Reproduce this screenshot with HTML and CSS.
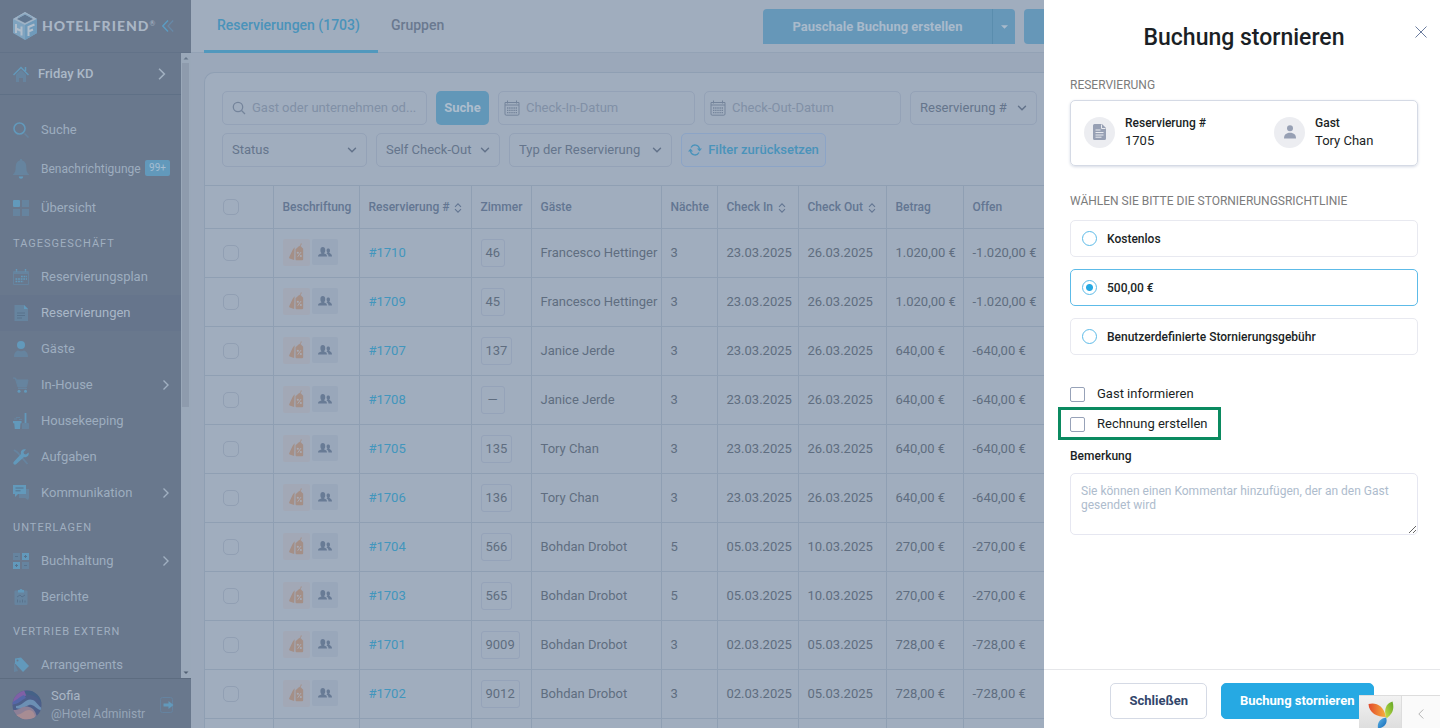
FILE: index.html
```html
<!DOCTYPE html>
<html lang="de">
<head>
<meta charset="utf-8">
<meta name="viewport" content="width=device-width, initial-scale=1">
<title>Reservierungen</title>
<link rel="stylesheet" href="styles.css">
</head>
<body>
<svg class="sprite" aria-hidden="true">
  <symbol id="i-chev-down" viewBox="0 0 10 10"><path d="M1.500 3.200 5 6.800l3.500-3.600" fill="none" stroke="currentColor" stroke-width="1.400" stroke-linecap="round"/></symbol>
  <symbol id="i-chev-right" viewBox="0 0 8 12"><path d="M1.500 1.500 6 6l-4.500 4.500" fill="none" stroke="currentColor" stroke-width="1.400"/></symbol>
  <symbol id="i-sort" viewBox="0 0 8 10"><path d="M1 3.800 4 .8l3 3M1 6.200l3 3 3-3" fill="none" stroke="currentColor" stroke-width="1.100"/></symbol>
  <symbol id="i-cal" viewBox="0 0 16 16"><path d="M1 2.500h14v11.500a1.200 1.200 0 0 1-1.200 1.200H2.200A1.200 1.200 0 0 1 1 14zM1 5h14M3.500.5v3M12.500.5v3" fill="none" stroke="currentColor"/><path d="M3 8h10M3 10.300h10M3 12.600h10" stroke="currentColor" stroke-width="1.300" stroke-dasharray="1.400 .75"/></symbol>
  <symbol id="i-tags" viewBox="0 0 16 20"><path d="M6 4.500 4 7 .3 15c-.2.600 0 1 .5 1.200L5.500 18zM7 6.500l3.500-3h2L15 6v11a1.200 1.200 0 0 1-1.200 1.200H8A1.200 1.200 0 0 1 7 17z" fill="currentColor"/><path d="M11.500 5c-1-2 1.500-2 1.500-4.500" fill="none" stroke="currentColor"/><path d="m9.200 14.500 3.600-5" stroke="#a9acb6"/><circle cx="9.400" cy="10.300" r="1.100" fill="#a9acb6"/><circle cx="12.600" cy="13.700" r="1.100" fill="#a9acb6"/></symbol>
  <symbol id="i-people" viewBox="0 0 14 10"><path d="M0 9.500C0 7 3 6.800 3.500 6.200 2.700 5.500 2.400 4.500 2.400 3 2.400 1 3.300 0 4.800 0s2.400 1 2.400 3c0 1.500-.3 2.500-1.100 3.200C6.600 6.800 9 7 9 9.500zM10.500 9.500c0-1.500-.8-2.400-2-2.900.6-.4.900-.8.800-1.300-.5-.6-.7-1.200-.7-1.900C8.600 2 9.300 1.500 10.300 1.500S12 2 12 3.500c0 1-.2 1.500-.8 2 .3 1 2.800.9 2.800 4z" fill="currentColor"/></symbol>
</svg>

<div class="app">
  <aside class="sidebar">
    <div class="brand">
      <svg class="brand-mark" viewBox="0 0 26 30"><path d="M1 8 13 1l12 7v14l-12 7-12-7z" fill="#7fa3bf"/><path d="M1 8 13 1l12 7-12 6z" fill="#9fb2c5"/><path d="m5 8 8-4.500L21 8l-8 4z" fill="#607791"/><path d="m6 6.500 7-3.500 7 3.500" stroke="#7fa3bf" fill="none"/><path d="M13 14v15l12-7V8z" fill="#6f9aba"/><path d="M4 13v9M9.500 15.500v9M4 17.500l5.500 2.500M16.500 25v-9l6-2.500M16.500 20.500l4.500-2" stroke="#b0bdcb" stroke-width="2" fill="none"/></svg>
      <span class="brand-name">HOTELFRIEND<sup>®</sup></span>
      <button class="plain collapse" aria-label="Menü einklappen"><svg viewBox="0 0 12 12"><path d="M6 .5.800 6 6 11.500" fill="none" stroke="#5b9cc3" stroke-width="1.400"/><path d="M11.200.5 6 6l5.200 5.500" fill="none" stroke="#6789a8" stroke-width="1.200"/></svg></button>
    </div>
    <div class="side-body">
      <div class="side-scroll">
        <button class="hotel"><svg class="ico" viewBox="0 0 16 16"><path d="M3 8.500 8 4l5 4.500V16h-3v-4H6v4H3z" fill="#66849f"/><path d="M.5 9 8 1.500 15.500 9M12.500 1v4" fill="none" stroke="#6299bb" stroke-width="1.500"/></svg><span>Friday KD</span><svg class="go big"><use href="#i-chev-right"/></svg></button>
        <nav>
          <ul class="menu top">
            <li><a href="#"><svg class="ico" viewBox="0 0 16 16"><circle cx="6.500" cy="6.500" r="5.500" fill="none" stroke="#6299bb" stroke-width="1.600"/><path d="m11.500 11.500 4 4" stroke="#66849f" stroke-width="1.500"/></svg>Suche</a></li>
            <li><a href="#" class="compact"><svg class="ico tall" viewBox="0 0 16 20"><path d="M8 0c1 0 1.200.6 1.200 1.500C12 2 13.300 4.500 13.300 8c0 4 1 6 2.700 7.500V16H0v-.5C1.700 14 2.700 12 2.700 8c0-3.500 1.300-6 4.100-6.500C6.800.6 7 0 8 0z" fill="#66849f"/><path d="M5.800 17.500h4.400a2.200 2.200 0 0 1-4.400 0z" fill="#6299bb"/></svg>Benachrichtigunge<span class="count">99+</span></a></li>
            <li><a href="#"><svg class="ico" viewBox="0 0 16 16"><rect width="7" height="7" rx="1" fill="#6299bb"/><path d="M9 0h7v7H9zM0 9h7v7H0zM9 9h7v7H9z" fill="#66849f"/></svg>Übersicht</a></li>
          </ul>
          <h2 class="group">Tagesgeschäft</h2>
          <ul class="menu">
            <li><a href="#"><svg class="ico" viewBox="0 0 16 16"><path d="M.5 2.500h15v13H.5z" fill="none" stroke="#66849f"/><path d="M1 3h14v2H1z" fill="#66849f"/><path d="M3.500 0v3M12.500 0v3M8 7.500h6M2.500 10h11.500M2.500 12.500h8" stroke="#6299bb" stroke-width="1.400" stroke-dasharray="1.800 .8"/></svg>Reservierungsplan</a></li>
            <li class="active"><a href="#"><svg class="ico" viewBox="0 0 16 16"><path d="M1.500 0H11l4 4v12H1.500z" fill="#66849f"/><path d="M11 0v4h4z" fill="#6299bb"/><path d="M4 8h8M4 10.500h8M4 13h5" stroke="#58728c"/></svg>Reservierungen</a></li>
            <li><a href="#"><svg class="ico" viewBox="0 0 16 16"><circle cx="8" cy="4" r="4" fill="#6299bb"/><path d="M1 16c0-4 2-6 4-6.500 2 1 4 1 6 0 2 .5 4 2.500 4 6.500z" fill="#66849f"/></svg>Gäste</a></li>
            <li><a href="#"><svg class="ico" viewBox="0 0 16 16"><path d="M0 1h2.500l1 2H15l-1.500 7H5L2.500 2M5 11.500h9" fill="#66849f" stroke="#66849f"/><circle cx="6" cy="14.300" r="1.500" fill="#6299bb"/><circle cx="12.500" cy="14.300" r="1.500" fill="#6299bb"/></svg>In-House<svg class="go"><use href="#i-chev-right"/></svg></a></li>
            <li><a href="#"><svg class="ico" viewBox="0 0 16 16"><path d="M12.500 0v10" stroke="#6299bb" stroke-width="1.800"/><path d="M9.500 10.500h6V16h-6zM1 6h3M3 4.500h4M6 6.500h3" fill="#66849f" stroke="#66849f"/><path d="M0 8h8.500v2.200H7.500L7 16H1.800l-.6-5.800H0z" fill="#6299bb"/></svg>Housekeeping</a></li>
            <li><a href="#"><svg class="ico" viewBox="0 0 16 16"><path d="m1 1 3.500 2.500L14.500 15" stroke="#66849f" stroke-width="1.800" fill="none"/><path d="M15.500 3.500 13 5.500l-2-.5-.5-2L13 .5c-3-1.300-6 1-5 4.500L.6 13c-1 2 1 3.500 2.500 2.300L11 8c3.500 1 5.500-2 4.500-4.500z" fill="#6299bb"/></svg>Aufgaben</a></li>
            <li><a href="#"><svg class="ico" viewBox="0 0 16 16"><path d="M10 4h6v9l-1 2-3-2H6V9h4z" fill="#66849f"/><path d="M0 0h13v9H5l-3 3V9H0z" fill="#6299bb"/><path d="M2.500 3h8M2.500 5.800h5" stroke="#58728c"/></svg>Kommunikation<svg class="go"><use href="#i-chev-right"/></svg></a></li>
          </ul>
          <h2 class="group">Unterlagen</h2>
          <ul class="menu">
            <li><a href="#"><svg class="ico" viewBox="0 0 16 16"><path d="M0 0h7v7H0zM9 9h7v7H9z" fill="#66849f"/><path d="M9 0h7v7H9zM0 9h7v7H0z" fill="#6299bb"/><path d="M12.500 2v3M11 3.500h3M2 12.500h3M3.500 11v3M2 3.500h3M11 12.500h3" stroke="#58728c"/></svg>Buchhaltung<svg class="go"><use href="#i-chev-right"/></svg></a></li>
            <li><a href="#"><svg class="ico" viewBox="0 0 16 16"><rect x="1.500" y="1.500" width="13" height="14.500" rx="1" fill="#66849f"/><path d="M5 1h1.500C7-.3 9-.3 9.500 1H11v2.500H5z" fill="#6299bb"/><path d="m4 8 3-2 2 2 3-2M4.500 13.500v-3M7 13.500v-2M9.500 13.500v-3M12 13.500v-2" stroke="#58728c" fill="none"/></svg>Berichte</a></li>
          </ul>
          <h2 class="group">Vertrieb extern</h2>
          <ul class="menu">
            <li><a href="#"><svg class="ico" viewBox="0 0 16 16"><path d="M1 5v10l4-1z" fill="#66849f"/><path d="M2 1.500 8 .5l8 8.500-6 6L2 6.500z" fill="#6299bb"/><circle cx="4.500" cy="3.500" r="1" fill="#69788d"/></svg>Arrangements</a></li>
          </ul>
        </nav>
      </div>
      <div class="track" aria-hidden="true"><svg viewBox="0 0 8 8"><path d="M1.500 5.500 4 3l2.500 2.500z" fill="#66768a"/></svg><div class="thumb"></div><svg viewBox="0 0 8 8"><path d="M1.500 2.500 4 5l2.500-2.500z" fill="#505f73"/></svg></div>
    </div>
    <div class="user">
      <svg class="avatar" viewBox="0 0 30 30"><defs><clipPath id="av"><circle cx="15" cy="15" r="14.500"/></clipPath></defs><g clip-path="url(#av)"><path d="M0 0h30v30H0z" fill="#4d5f8a"/><path d="M0 0h20L10 9 0 15z" fill="#8060a6"/><path d="M0 14c6 1 9-4 14-6l-2-3C7 7 4 11 0 12z" fill="#5567a8"/><path d="M14 5c8-1 13 3 16 9V0H12z" fill="#456287"/><path d="M4 16c7 0 10-9 17-6 4 2 5 6 9 8v3c-6-2-8-7-13-6-5 2-8 5-13 3z" fill="#6c8fb4"/><path d="M0 20c8 1 10-5 17-3 5 1 7 6 8 10L18 30H0z" fill="#8d8097"/><path d="M3 25c7 0 9-5 14-5 4 0 6 4 6 8L12 30z" fill="#a78c93"/></g></svg>
      <div class="who"><b>Sofia</b><span>@Hotel Administr</span></div>
      <button class="plain logout" aria-label="Abmelden"><svg viewBox="0 0 14 16"><rect x=".5" y=".5" width="12" height="15" rx="2" fill="none" stroke="#6583a0"/><path d="M3.500 6.500h5V4L13.500 8l-5 4V9.500h-5z" fill="#6299bb"/></svg></button>
    </div>
  </aside>

  <main class="main">
    <header class="topbar">
      <nav class="tabs"><a class="tab on" href="#">Reservierungen (1703)</a><a class="tab" href="#">Gruppen</a></nav>
      <div class="actions">
        <div class="split"><button>Pauschale Buchung erstellen</button><button class="more" aria-label="Mehr"><svg viewBox="0 0 8 4"><path d="M0 0h8L4 4z" fill="currentColor"/></svg></button></div>
        <button class="create" aria-label="Erstellen"></button>
      </div>
    </header>
    <section class="card">
      <form class="filters">
        <div class="line">
          <label class="field w-search"><svg class="lens" viewBox="0 0 14 14"><circle cx="6" cy="6" r="4.700" fill="none" stroke="currentColor" stroke-width="1.300"/><path d="m9.500 9.500 3.500 3.500" stroke="currentColor" stroke-width="1.300"/></svg><input type="text" placeholder="Gast oder unternehmen od..." aria-label="Gast oder Unternehmen"></label>
          <button class="search" type="button">Suche</button>
          <label class="field date"><svg class="cal"><use href="#i-cal"/></svg><input type="text" placeholder="Check-In-Datum" aria-label="Check-In-Datum"></label>
          <label class="field date"><svg class="cal"><use href="#i-cal"/></svg><input type="text" placeholder="Check-Out-Datum" aria-label="Check-Out-Datum"></label>
          <label class="field w-res"><select aria-label="Sortierfeld"><option>Reservierung #</option></select><svg class="chev"><use href="#i-chev-down"/></svg></label>
        </div>
        <div class="line">
          <label class="field w-status"><select aria-label="Status"><option>Status</option></select><svg class="chev"><use href="#i-chev-down"/></svg></label>
          <label class="field w-self"><select aria-label="Self Check-Out"><option>Self Check-Out</option></select><svg class="chev"><use href="#i-chev-down"/></svg></label>
          <label class="field w-type"><select aria-label="Typ der Reservierung"><option>Typ der Reservierung</option></select><svg class="chev"><use href="#i-chev-down"/></svg></label>
          <button class="reset" type="button"><svg viewBox="0 0 14 12"><path d="M2.500 7A4.500 4.500 0 0 0 11 8.500M11.500 5A4.500 4.500 0 0 0 3 3.500" fill="none" stroke="currentColor" stroke-width="1.300"/><path d="M0 7.500 2.500 4.500 5 7.500zM9 4.500h5L11.500 7.500z" fill="currentColor"/></svg>Filter zurücksetzen</button>
        </div>
      </form>
      <table class="grid">
        <colgroup><col class="c-check"><col class="c-label"><col class="c-res"><col class="c-room"><col class="c-guest"><col class="c-nights"><col class="c-in"><col class="c-out"><col class="c-sum"><col></colgroup>
        <thead><tr><th><input type="checkbox" aria-label="Alle auswählen"></th><th>Beschriftung</th><th>Reservierung # <svg class="sort"><use href="#i-sort"/></svg></th><th>Zimmer</th><th>Gäste</th><th>Nächte</th><th>Check In <svg class="sort"><use href="#i-sort"/></svg></th><th>Check Out <svg class="sort"><use href="#i-sort"/></svg></th><th>Betrag</th><th>Offen</th></tr></thead>
        <tbody>
          <tr><td><input type="checkbox" aria-label="1710"></td><td><span class="tags"><svg class="offer"><use href="#i-tags"/></svg><svg class="people"><use href="#i-people"/></svg></span></td><td><a href="#">#1710</a></td><td><span class="room">46</span></td><td>Francesco Hettinger</td><td>3</td><td>23.03.2025</td><td>26.03.2025</td><td>1.020,00 €</td><td>-1.020,00 €</td></tr>
          <tr><td><input type="checkbox" aria-label="1709"></td><td><span class="tags"><svg class="offer"><use href="#i-tags"/></svg><svg class="people"><use href="#i-people"/></svg></span></td><td><a href="#">#1709</a></td><td><span class="room">45</span></td><td>Francesco Hettinger</td><td>3</td><td>23.03.2025</td><td>26.03.2025</td><td>1.020,00 €</td><td>-1.020,00 €</td></tr>
          <tr><td><input type="checkbox" aria-label="1707"></td><td><span class="tags"><svg class="offer"><use href="#i-tags"/></svg><svg class="people"><use href="#i-people"/></svg></span></td><td><a href="#">#1707</a></td><td><span class="room">137</span></td><td>Janice Jerde</td><td>3</td><td>23.03.2025</td><td>26.03.2025</td><td>640,00 €</td><td>-640,00 €</td></tr>
          <tr><td><input type="checkbox" aria-label="1708"></td><td><span class="tags"><svg class="offer"><use href="#i-tags"/></svg><svg class="people"><use href="#i-people"/></svg></span></td><td><a href="#">#1708</a></td><td><span class="room">—</span></td><td>Janice Jerde</td><td>3</td><td>23.03.2025</td><td>26.03.2025</td><td>640,00 €</td><td>-640,00 €</td></tr>
          <tr><td><input type="checkbox" aria-label="1705"></td><td><span class="tags"><svg class="offer"><use href="#i-tags"/></svg><svg class="people"><use href="#i-people"/></svg></span></td><td><a href="#">#1705</a></td><td><span class="room">135</span></td><td>Tory Chan</td><td>3</td><td>23.03.2025</td><td>26.03.2025</td><td>640,00 €</td><td>-640,00 €</td></tr>
          <tr><td><input type="checkbox" aria-label="1706"></td><td><span class="tags"><svg class="offer"><use href="#i-tags"/></svg><svg class="people"><use href="#i-people"/></svg></span></td><td><a href="#">#1706</a></td><td><span class="room">136</span></td><td>Tory Chan</td><td>3</td><td>23.03.2025</td><td>26.03.2025</td><td>640,00 €</td><td>-640,00 €</td></tr>
          <tr><td><input type="checkbox" aria-label="1704"></td><td><span class="tags"><svg class="offer"><use href="#i-tags"/></svg><svg class="people"><use href="#i-people"/></svg></span></td><td><a href="#">#1704</a></td><td><span class="room">566</span></td><td>Bohdan Drobot</td><td>5</td><td>05.03.2025</td><td>10.03.2025</td><td>270,00 €</td><td>-270,00 €</td></tr>
          <tr><td><input type="checkbox" aria-label="1703"></td><td><span class="tags"><svg class="offer"><use href="#i-tags"/></svg><svg class="people"><use href="#i-people"/></svg></span></td><td><a href="#">#1703</a></td><td><span class="room">565</span></td><td>Bohdan Drobot</td><td>5</td><td>05.03.2025</td><td>10.03.2025</td><td>270,00 €</td><td>-270,00 €</td></tr>
          <tr><td><input type="checkbox" aria-label="1701"></td><td><span class="tags"><svg class="offer"><use href="#i-tags"/></svg><svg class="people"><use href="#i-people"/></svg></span></td><td><a href="#">#1701</a></td><td><span class="room">9009</span></td><td>Bohdan Drobot</td><td>3</td><td>02.03.2025</td><td>05.03.2025</td><td>728,00 €</td><td>-728,00 €</td></tr>
          <tr><td><input type="checkbox" aria-label="1702"></td><td><span class="tags"><svg class="offer"><use href="#i-tags"/></svg><svg class="people"><use href="#i-people"/></svg></span></td><td><a href="#">#1702</a></td><td><span class="room">9012</span></td><td>Bohdan Drobot</td><td>3</td><td>02.03.2025</td><td>05.03.2025</td><td>728,00 €</td><td>-728,00 €</td></tr>
          <tr><td></td><td></td><td></td><td></td><td></td><td></td><td></td><td></td><td></td><td></td></tr>
        </tbody>
      </table>
    </section>
  </main>
</div>

<aside class="drawer" role="dialog" aria-labelledby="title">
  <button class="plain close" aria-label="Dialog schließen"><svg viewBox="0 0 12 12"><path d="m.5.5 11 11M11.500.5l-11 11" stroke="#6b7c9e" stroke-width="1"/></svg></button>
  <div class="drawer-body">
    <h1 id="title">Buchung stornieren</h1>
    <h2 class="caption">RESERVIERUNG</h2>
    <div class="summary">
      <div class="info"><span class="disc"><svg width="13" height="16" viewBox="0 0 13 16"><path d="M1.500 0H9l4 4v10.500a1.500 1.500 0 0 1-1.500 1.500h-10A1.500 1.500 0 0 1 0 14.500v-13A1.500 1.500 0 0 1 1.500 0z" fill="#97a0b4"/><path d="M8.500.5v4h4" fill="none" stroke="#e8eaef"/><path d="M2.500 6h5M2.500 8.500h8M2.500 11h8M2.500 13.200h6" stroke="#e8eaef"/></svg></span><div><b>Reservierung #</b><span>1705</span></div></div>
      <div class="info"><span class="disc"><svg width="14" height="14" viewBox="0 0 14 14"><circle cx="7" cy="3.300" r="3" fill="#97a0b4"/><path d="M1 13.500C1 10 3 7.800 7 7.800s6 2.200 6 5.700z" fill="#97a0b4"/></svg></span><div><b>Gast</b><span>Tory Chan</span></div></div>
    </div>
    <h2 class="caption second">WÄHLEN SIE BITTE DIE STORNIERUNGSRICHTLINIE</h2>
    <div class="options">
      <label class="option"><input type="radio" name="fee">Kostenlos</label>
      <label class="option"><input type="radio" name="fee" checked>500,00 €</label>
      <label class="option"><input type="radio" name="fee">Benutzerdefinierte Stornierungsgebühr</label>
    </div>
    <div class="checks">
      <label><input type="checkbox">Gast informieren</label>
      <label class="marked"><input type="checkbox">Rechnung erstellen</label>
    </div>
    <label class="note-label" for="note">Bemerkung</label>
    <textarea id="note" placeholder="Sie können einen Kommentar hinzufügen, der an den Gast gesendet wird"></textarea>
  </div>
  <footer class="drawer-foot"><button class="btn">Schließen</button><button class="btn primary">Buchung stornieren</button></footer>
</aside>

<div class="debug">
  <a href="#" class="debug-logo" aria-label="Debugger"><svg viewBox="0 0 26 28"><defs><linearGradient id="yr" x2="1"><stop stop-color="#e2492c"/><stop offset="1" stop-color="#f7b13c"/></linearGradient><linearGradient id="yg" x1="1" x2="0" y2="1"><stop stop-color="#5fa525"/><stop offset="1" stop-color="#cbe04a"/></linearGradient><linearGradient id="yb" y2="1"><stop stop-color="#5db5e8"/><stop offset="1" stop-color="#1166b4"/></linearGradient></defs><path d="M.5 3c7-2 15 1 17.500 13C9 16 1 12 .5 3z" fill="url(#yr)"/><path d="M24.500.5c2 7 .5 12-6 17-3-8-1-15 6-17z" fill="url(#yg)"/><path d="M18 16.500c2 5-1 10-8 11-1-6 2-10 8-11z" fill="url(#yb)"/></svg></a>
  <button class="debug-toggle" aria-label="Ausklappen"><svg viewBox="0 0 6 10"><path d="M5.300.5.800 5l4.500 4.500" fill="none" stroke="#b5b5b5" stroke-width="1"/></svg></button>
</div>
</body>
</html>
```

FILE: styles.css
```css
* { box-sizing: border-box; }
body { margin: 0; height: 100vh; overflow: hidden; font: 13px/18px Roboto, "Liberation Sans", sans-serif; color: #5f6d80; }
button, input, select, textarea { font: inherit; color: inherit; }
button { cursor: pointer; }
a { color: inherit; text-decoration: none; }
ul { list-style: none; margin: 0; padding: 0; }
h1, h2 { margin: 0; }
.sprite { display: none; }
.plain { border: 0; padding: 0; background: none; display: flex; }

.app { display: flex; height: 100%; background: #9ba8ba; }

/* Sidebar */
.sidebar { width: 191px; flex: none; display: flex; flex-direction: column; background: #69788d; color: #9dadbf; }
.brand { height: 53px; flex: none; display: flex; align-items: center; padding: 0 17px 0 12px; border-bottom: 1px solid #627288; }
.brand-mark { width: 26px; height: 30px; flex: none; }
.brand-name { font: 900 14px/20px Lato, sans-serif; letter-spacing: 1px; color: #a9b6c5; margin-left: 4px; }
.brand-name sup { font-size: 7px; line-height: 0; vertical-align: 5px; letter-spacing: 0; font-weight: 400; }
.collapse { margin-left: auto; }
.collapse svg { width: 12px; height: 12px; }
.side-body { flex: 1; min-height: 0; display: flex; }
.side-scroll { flex: 1; min-width: 0; overflow: hidden; }
.hotel { width: 100%; height: 42px; display: flex; align-items: center; gap: 9px; padding: 0 14px 0 13px; background: none; border: 0; border-bottom: 1px solid #5f7086; font-weight: 500; color: #abb8c7; }
.ico { width: 16px; height: 16px; flex: none; }
.ico.tall { height: 20px; }
.go { width: 8px; height: 12px; margin-left: auto; color: #a1b0c1; }
.go.big { height: 14px; width: 10px; }
.menu a { position: relative; height: 36px; display: flex; align-items: center; gap: 12px; padding: 0 11px 0 13px; }
.menu.top { padding-top: 15px; }
.menu.top a { height: 39px; }
.menu.top .compact { font-size: 12px; }
.menu .active { background: #66758c; color: #a9b7c7; }
.count { position: absolute; right: 11px; top: 11px; height: 16px; padding: 0 4px; font-size: 10px; line-height: 16px; color: #a5bdd1; background: #6299bb; border-radius: 2px; }
.group { height: 32px; padding: 9px 13px 0; font-size: 11px; line-height: 16px; font-weight: 400; letter-spacing: 1px; text-transform: uppercase; color: #a0afc0; }
.track { width: 10px; flex: none; display: flex; flex-direction: column; align-items: center; background: #9aa8b9; padding-right: 1px; }
.track svg { width: 8px; height: 10px; flex: none; }
.track svg:last-child { margin-top: auto; }
.thumb { width: 7px; height: 55%; background: #8e9bad; }
.user { height: 50px; flex: none; display: flex; align-items: center; padding: 2px 17px 0 12px; border-top: 1px solid #5d6c80; }
.avatar { width: 30px; height: 30px; }
.who { margin-left: 9px; display: flex; flex-direction: column; font-size: 12px; color: #97a6b8; }
.who b { font-size: 13px; font-weight: 400; color: #a9b6c5; }
.logout { margin-left: auto; }
.logout svg { width: 14px; height: 16px; }

/* Main area */
.main { flex: 1; min-width: 0; overflow: hidden; }
.topbar { height: 53px; display: flex; justify-content: space-between; padding-left: 13px; background: #a0adbe; border-bottom: 1px solid #93a2b5; }
.tabs { display: flex; }
.tab { height: 53px; padding: 0 13px; font-size: 14px; font-weight: 500; line-height: 50px; color: #6a7990; border-bottom: 3px solid transparent; }
.tab.on { padding-right: 18px; color: #4a93ba; border-color: #5198bd; }
.actions { display: flex; gap: 9px; padding: 9px 20px 0 0; }
.actions button { height: 35px; border: 0; background: #6697b8; color: #a9bacb; font-weight: 700; }
.split { display: flex; border-radius: 4px; overflow: hidden; }
.split button { width: 229px; }
.split .more { width: 23px; padding: 0; border-left: 1px solid #5a8dae; }
.more svg { width: 7px; height: 4px; vertical-align: middle; }
.actions .create { width: 396px; border-radius: 4px; }
.card { margin: 19px 0 0 13px; border: 1px solid #8f9fb3; border-right: 0; border-radius: 10px 0 0 0; background: #a0adbe; }
.filters { display: grid; gap: 8px; padding: 18px 17px; }
.line { display: flex; gap: 9px; }
.field { height: 34px; display: flex; align-items: center; border: 1px solid #94a2b7; border-radius: 5px; padding: 0 9px; flex: none; }
.field input, .field select { appearance: none; border: 0; padding: 0; background: none; outline: 0; min-width: 0; flex: 1; color: #65758c; }
.field input::placeholder { color: #8190a6; opacity: 1; }
.lens { width: 14px; height: 14px; margin-right: 6px; color: #74849b; }
.cal { width: 16px; height: 16px; margin-right: 6px; color: #74849b; }
.chev { width: 10px; height: 10px; flex: none; color: #62728a; }
.w-search { width: 205px; }
.date { width: 197px; padding: 0 5px; }
.w-res { width: 127px; }
.w-status { width: 145px; }
.w-self { width: 124px; }
.w-type { width: 163px; }
.search { width: 53px; padding: 0; border: 0; border-radius: 5px; background: #6297b8; color: #adbdcd; font-weight: 700; }
.reset { width: 145px; display: flex; align-items: center; justify-content: center; gap: 6px; padding: 0; border: 1px solid #8ca4c6; border-radius: 5px; background: #9dacc0; color: #4a93ba; font-weight: 500; }
.reset svg { width: 14px; height: 12px; }

.grid { width: 100%; table-layout: fixed; border-collapse: collapse; }
.c-check { width: 68px; } .c-label { width: 86px; } .c-res { width: 112px; } .c-room { width: 60px; } .c-guest { width: 130px; }
.c-nights { width: 56px; } .c-in { width: 81px; } .c-out { width: 88px; } .c-sum { width: 77px; }
.grid th, .grid td { height: 49px; padding: 0 0 1px 9px; text-align: left; border: 1px solid #8f9fb3; border-width: 1px 0 0 1px; white-space: nowrap; }
.grid th { height: 43px; font-size: 12px; font-weight: 500; color: #637692; }
.grid th:first-child, .grid td:first-child { border-left: 0; padding-left: 18px; }
.grid a { color: #4296bd; }
.grid input { appearance: none; display: block; width: 16px; height: 16px; margin: 0; border: 1px solid #919fb3; border-radius: 5px; }
.sort { width: 8px; height: 10px; margin-left: 2px; vertical-align: -2px; }
.tags { display: flex; gap: 2px; }
.offer, .people { width: 27px; height: 27px; border-radius: 2px; }
.offer { padding: 4px 5px; background: #a2a8b6; color: #a48f87; }
.people { width: 26px; height: 26px; padding: 7px 6px; background: #99a7ba; color: #687b95; }
.room { display: inline-block; height: 28px; min-width: 24px; padding: 0 4px; border: 1px solid #95a3b9; border-radius: 3px; line-height: 26px; text-align: center; }

/* Cancellation drawer */
.drawer { position: fixed; top: 0; right: 0; bottom: 0; width: 396px; display: flex; flex-direction: column; background: #fff; color: #1b1f25; }
.close { position: absolute; top: 26px; right: 13px; }
.close svg { width: 12px; height: 12px; }
.drawer-body { flex: 1; padding: 22px 22px 0 26px; }
.drawer h1 { font-size: 23px; line-height: 32px; font-weight: 500; text-align: center; }
.caption { margin: 22px 0 6px; font-size: 12px; line-height: 18px; font-weight: 400; color: #7c7c7c; }
.caption.second { margin: 26px 0 10px; }
.summary { display: grid; grid-template-columns: 190px 1fr; padding: 13px; border: 1px solid #d5dae5; border-radius: 5px; box-shadow: 0 1px 3px #d5dae5; }
.info { display: flex; align-items: center; gap: 10px; padding-bottom: 2px; }
.info b, .info span { display: block; }
.info b { font-size: 12px; font-weight: 500; }
.info > .disc { width: 31px; height: 31px; display: grid; place-items: center; border-radius: 50%; background: #ecedf1; }
.options { display: grid; gap: 12px; }
.option { height: 37px; display: flex; align-items: center; gap: 10px; padding: 0 11px; border: 1px solid #e8e9f0; border-radius: 5px; font-size: 12px; font-weight: 500; }
.option:has(:checked) { border-color: #5dbbe8; }
.option input { appearance: none; width: 15px; height: 15px; margin: 0; border: 1px solid #5dbbe8; border-radius: 50%; }
.option input:checked { background: radial-gradient(circle, #26a9e3 3px, #fff 4px); }
.checks { display: grid; gap: 12px; margin-top: 30px; }
.checks label { position: relative; display: flex; align-items: center; gap: 12px; justify-self: start; }
.checks input { appearance: none; width: 15px; height: 15px; margin: 0; border: 1px solid #97a2b8; border-radius: 2px; }
.marked::after { content: ""; position: absolute; inset: -8px -14px -7px -12px; border: 3px solid #0b8a60; pointer-events: none; }
.note-label { display: block; margin: 14px 0 8px; font-weight: 500; font-size: 12px; }
textarea { display: block; width: 100%; height: 62px; padding: 10px; border: 1px solid #e6e7f1; border-radius: 5px; font-size: 12px; line-height: 14px; resize: vertical; }
textarea::placeholder { color: #aebccd; opacity: 1; }
.drawer-foot { display: flex; justify-content: center; gap: 14px; padding: 13px 0 9px; border-top: 1px solid #e6e7ea; }
.btn { height: 36px; padding: 0 18px; border: 1px solid #d5dae5; border-radius: 5px; background: #fff; color: #33466b; font-weight: 700; }
.btn.primary { border-color: #26a9e3; background: #26a9e3; color: #fff; }

.debug { position: fixed; right: 0; bottom: 0; display: flex; height: 33px; border-top: 1px solid #ddd; background: #fafafa; }
.debug-logo { width: 43px; padding: 5px 9px 0; overflow: hidden; background: linear-gradient(#f2f2f2, #dedede); border-right: 1px solid #ddd; }
.debug-logo svg { width: 26px; height: 28px; display: block; }
.debug-toggle { width: 38px; border: 0; background: none; padding: 6px 0 0; }
.debug-toggle svg { width: 6px; height: 10px; }
```
